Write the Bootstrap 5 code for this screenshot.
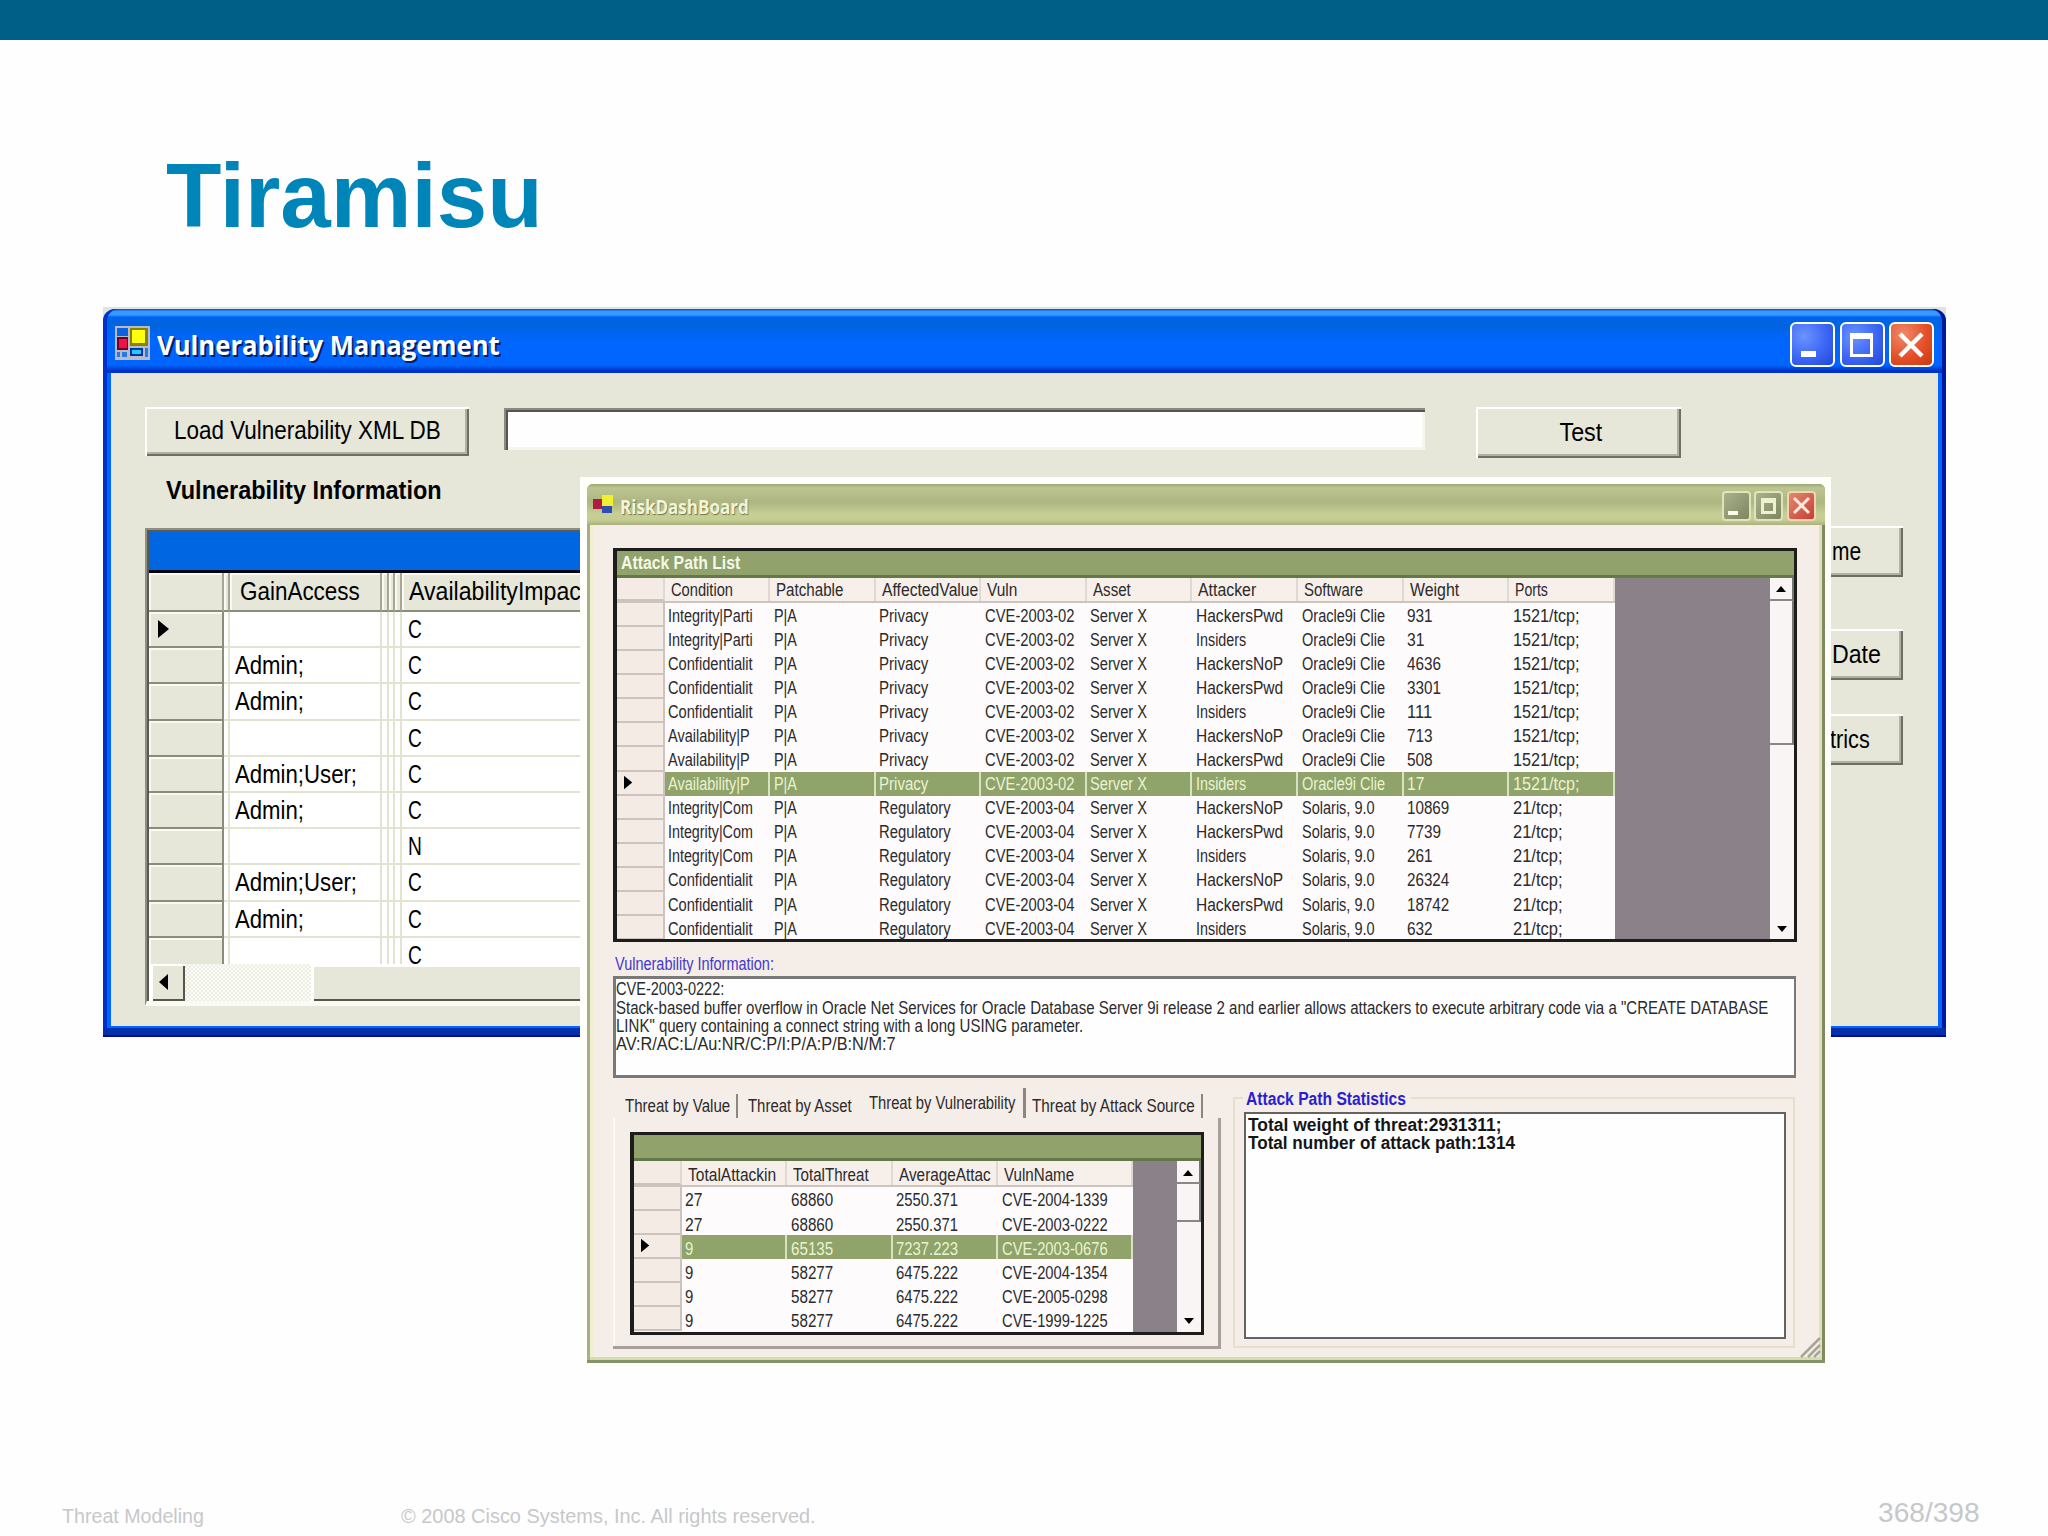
<!DOCTYPE html>
<html lang="en">
<head>
<meta charset="utf-8">
<title>Tiramisu</title>
<link href="https://cdn.jsdelivr.net/npm/bootstrap@5.3.0/dist/css/bootstrap.min.css" rel="stylesheet">
<style>
body{width:2048px;height:1536px;background:#fefefe;font-family:"Liberation Sans",Arial,sans-serif;color:#000;line-height:1;overflow:hidden}
.topbar{height:40px;background:#005f87}
.slide-title{font-size:91px;font-weight:700;color:#0085b9;padding:111px 0 0 166px;line-height:90px}
.ft{display:inline-block;white-space:nowrap;transform-origin:0 50%}
.ft.mid{transform-origin:50% 50%}
.slide-foot{left:0;right:0;top:1497px;height:40px;color:#c6c8ca;font-size:19.5px}
/* blue window */
.win-a{left:103px;top:307px;width:1843px;height:730px;background:#e2e4d8}
.win-a .frame{height:728px;margin-top:2px;border-radius:12px 12px 0 0;background:linear-gradient(#0a5be8 0 1px,#3798ff 2px 6px,#0064f0 8px,#0064dc 14px,#0065ec 22px,#0066ff 34px,#0066ff 56px,#0030c0 62px,#0030c0 64px,#0066ff 64px);padding:0 8px 11px;box-shadow:inset 0 -2px 0 #000c80,inset 0 -9px 0 #0030b0,inset 4px 0 0 #0033cc,inset -4px 0 0 #0018a0}
.bar-a{height:64px;padding:0 4px}
.bar-a .cap{font-family:"Open Sans","Noto Sans",sans-serif;font-weight:700;font-size:27px;color:#fff;text-shadow:2px 2px 0 #00206a;padding-top:7px}
.cbtn{width:45px;height:45px;border:2px solid #fff;border-radius:6px;background:radial-gradient(circle at 30% 30%,#6c93ff,#3c66f4 55%,#2148d8)}
.cbtn.x{background:radial-gradient(circle at 30% 25%,#f08a68,#e5502a 55%,#c83808)}
.client-a{height:653px;background:#e6e7d9;padding:34px 0 0 34px}
.btn95{border:0;border-radius:0;background:#e6e7d9;color:#000;font-size:26px;padding:0;box-shadow:inset 2px 2px 0 #fff,inset -2px -2px 0 #6e6e64,inset -4px -4px 0 #b0b1a0}
.inp95{border:0;border-radius:0;background:#fefefe;box-shadow:inset 2px 2px 0 #8a8b80,inset 4px 4px 0 #55564e,inset -3px -3px 0 #f6f7ee}
.grid-a{width:700px;height:478px;border-left:2px solid #8f9084;border-top:2px solid #8f9084;border-bottom:5px solid #fbfbf5;background:#fff;font-size:26px;box-shadow:inset 2px 2px 0 #5a5a55}
.grid-a .band{margin:2px 0 0 2px;height:41px;background:#0066e2;border-bottom:3px solid #05050f}
.grid-a .rows{margin-left:2px;height:391px;overflow:hidden}
.ra{height:36.2px;flex:none}
.ra.hd{height:39px}
.ra>div{flex:none;border-right:2px solid #e3e3d2;border-bottom:2px solid #e3e3d2;display:flex;align-items:center;padding-left:5px}
.ra>div:first-child,.ra.hd>div{background:#e6e7d9}
.ra>div:first-child{width:75px;border-right:2px solid #8b8c7c;border-bottom:2px solid #8b8c7c;box-shadow:inset 2px 2px 0 #fafaf4}
.ra.hd>div{border-bottom:2px solid #8b8c7c;border-right-color:#a5a693;box-shadow:inset 2px 2px 0 #fafaf4;padding-left:10px;padding-bottom:2px}
.ra>div:nth-child(2){width:6px;padding:0}.ra>div:nth-child(3){width:152px}
.ra>div:nth-child(4),.ra>div:nth-child(5),.ra>div:nth-child(6){width:6.5px;padding:0}
.ra>div:nth-child(7){width:300px;border-right:0;padding-left:6px}
.ra.hd>div:nth-child(7){padding-left:7px}
.sb-a{height:37px;margin-left:2px}
.sb-a .go{width:36px;box-shadow:inset 4px 2px 0 #fff,inset -2px -2px 0 #55564e;background:#e6e7d9}
.sb-a .trk{width:126px;background:repeating-conic-gradient(#eeefe4 0 25%,#fbfbf6 0 50%) 0 0/4px 4px}
.sb-a .thumb{background:#e6e7d9;box-shadow:inset 3px 3px 0 #fff,inset 0 -2px 0 #55564e}
.side{left:1373px;top:219px;width:427px}
.side .btn95{height:51px;text-align:left;padding-left:356px;padding-bottom:2px}
/* green window */
.halo{left:580px;top:477px;width:1250.5px;height:890px;background:#fefefb}
.win-b{margin:7px 0 0 7px;width:1237.5px;height:879px;background:#f5ede7;border-radius:6px 6px 0 0;color:#2c2a2c;font-size:17.5px;box-shadow:inset 0 -3px 0 #869268,inset 3px 0 0 #a9ad88,inset -3px 0 0 #7f8a60,inset 0 -6px 0 #d5dcb2,inset 6px 0 0 #eef0cf,inset -6px 0 0 #dfe0bd}
.bar-b{height:41px;border-radius:6px 6px 0 0;background:linear-gradient(#9da77a,#bcc690 4px,#b6be89 10px,#adb582 18px,#b9c28a 24px,#c6cf95 30px,#c6cd93 36px,#a9b07c);padding:0 9px 0 6px}
.bar-b .cap{font-family:"Open Sans","Noto Sans",sans-serif;font-weight:700;font-size:19px;color:#f1f4d8;text-shadow:1px 1px 1px #6e7750;padding-top:5px}
.sbtn{width:29px;height:30px;border:2px solid #dfe4bd;border-radius:4px;background:linear-gradient(135deg,#a9b188,#7d8760)}
.sbtn.x{border-color:#f3d5b5;background:linear-gradient(135deg,#e08a70,#cc3c34)}
.client-b{padding:22.5px 0 0 26px}
.grid-b{border:3px solid #1d1d1b;border-left-width:4px;background:#fdfbfc;overflow:hidden}
.grid-b .band{background:#91a26d;border-bottom:3px solid #65784a;color:#f4f8e6;font-weight:700;padding-top:3px}
.grid-b .void{background:#8a8288}
.rb{height:24.05px}
.rb>div{width:105.6px;flex:none;padding-left:3.5px;overflow:hidden;height:100%;display:flex;align-items:center}
.rb>div:not(:first-child){padding-top:3px}
.rb>div:first-child{width:47.5px;background:#f5ebe5;border-right:2px solid #cdc2bd;border-bottom:2px solid #cdc2bd}
.rb.hd{height:25.7px;background:#f6efea;border-bottom:2px solid #cdc4be}
.rb.hd>div{padding-left:6px;border-right:2px solid #e0d8d2}
.rb.sel>div:not(:first-child){background:#8fa36b;color:#e9f3cf;border-right:2px solid #d9e2c0}
.sb-b{width:24px;background:#faf5f5}
.sb-b .up{height:23px;border-bottom:2px solid #888;border-right:2px solid #777}
.sb-b .thumb{border-bottom:2px solid #888;border-right:2px solid #777}
.blue{color:#4338cf}
.memo{border:3px solid #7b7978;border-right-width:2px;background:#fefefe;width:1183px;height:102px;padding:2px 0 0 0;margin-top:5px}
.memo div{height:18.3px;display:flex;align-items:center}
.tabs95{height:31px}
.tabs95>div{flex:none;height:24px;display:flex;align-items:center;padding-top:2px}
.tabpage{width:608px;height:231px;border-right:3px solid #a79f99;border-bottom:3px solid #a79f99;box-shadow:inset 2px 0 0 #fcf8f4;padding:14px 0 0 17px}
.tabpage .rb>div:not(:first-child){padding-top:5px}
.grp{width:562px;height:251px;border:2px solid #e6dfcb;padding:13px 0 0 9px}
.grp .lst{width:542px;height:227px;border:2px solid #66625f;background:#fefefe;font-weight:700;color:#151515;padding-top:2px}
.grp .lst div{height:18.5px;display:flex;align-items:center;padding-left:2px}
.grp .ttl{left:8px;top:-8px;background:#f5ede7;font-weight:700;color:#2a1ed0;width:168px;padding-left:3px;height:18px}
.grip{right:4px;bottom:5px}
</style>
</head>
<body class="position-relative">
<div class="topbar"></div>
<div class="slide-title"><span class="ft" data-w="377">Tiramisu</span></div>

<section class="win-a position-absolute">
 <div class="frame">
  <div class="bar-a d-flex align-items-center">
   <svg width="35" height="34" viewBox="0 0 35 34" style="margin-top:3px"><rect width="35" height="34" fill="#b7bcc8"/><rect x="2" y="2" width="11" height="8" fill="#0a62e0"/><rect x="2" y="11" width="11" height="13" fill="#700020"/><rect x="4" y="13" width="8" height="9" fill="#f0104c"/><rect x="15" y="2" width="18" height="18" fill="#8a8000"/><rect x="17" y="4" width="13" height="13" fill="#ffff10"/><rect x="15" y="22" width="13" height="8" fill="#0030b0"/><rect x="17" y="24" width="9" height="4" fill="#20d0f0"/><path d="M2 26h3v5H2zM7 26h5v5H7zM30 22h3v9h-3z" fill="#2a78e0"/></svg>
   <div class="cap" style="margin-left:7px"><span class="ft" data-w="343">Vulnerability Management</span></div>
   <div class="d-flex ms-auto" style="gap:4.5px;margin-top:7px">
    <div class="cbtn"><svg width="41" height="41"><path d="M9 27h15v6H9z" fill="#fff"/></svg></div>
    <div class="cbtn"><svg width="41" height="41"><path d="M8 9h23v24H8zM11 15v15h17V15z" fill="#fff" fill-rule="evenodd"/></svg></div>
    <div class="cbtn x"><svg width="41" height="41"><path d="M9 10L31 32M31 10L9 32" stroke="#fff" stroke-width="4.5"/></svg></div>
   </div>
  </div>
  <div class="client-a position-relative">
   <div class="d-flex align-items-start">
    <button class="btn95" style="width:324px;height:49px;padding-bottom:4px"><span class="ft mid" data-w="267">Load Vulnerability XML DB</span></button>
    <div class="inp95" style="width:921px;height:42px;margin:1px 51px 0 35px"></div>
    <button class="btn95" style="width:205px;height:51px;padding:0 0 2px 5px"><span class="ft mid" data-w="43">Test</span></button>
   </div>
   <div class="fw-bold" style="font-size:25px;margin:20px 0 0 21px;height:50px"><span class="ft" data-w="276">Vulnerability Information</span></div>
   <div class="grid-a" id="gridA"><div class="band"></div><div class="rows" id="rowsA"></div>
    <div class="sb-a d-flex"><div class="go"><svg width="36" height="36"><path d="M10 18l9-8v16z"/></svg></div><div class="trk"></div><div class="thumb flex-fill"></div></div>
   </div>
  </div>
 </div>
 <div class="side position-absolute d-flex flex-column">
  <button class="btn95" style="margin-bottom:52px"><span class="ft" data-w="29">me</span></button>
  <button class="btn95" style="margin-bottom:34px"><span class="ft" data-w="49">Date</span></button>
  <button class="btn95" style="padding-left:354px"><span class="ft" data-w="40">trics</span></button>
 </div>
</section>

<div class="halo position-absolute">
<section class="win-b position-relative">
 <div class="bar-b d-flex align-items-center">
  <svg width="21" height="19" viewBox="0 0 21 19"><rect x="9" y="0" width="11" height="11" fill="#f2ee30"/><rect x="0" y="4" width="9" height="10" fill="#b01c40"/><rect x="9" y="11" width="10" height="7" fill="#2f4fb0"/></svg>
  <div class="cap" style="margin-left:6px"><span class="ft" data-w="129">RiskDashBoard</span></div>
  <div class="d-flex ms-auto" style="gap:3.5px;margin-top:3px">
   <div class="sbtn"><svg width="25" height="26" class="d-block"><path d="M4 18h10v4H4z" fill="#fbfbe8"/></svg></div>
   <div class="sbtn"><svg width="25" height="26" class="d-block"><path d="M5 5h15v16H5zM8 10v8h9v-8z" fill="#eef0d0" fill-rule="evenodd"/></svg></div>
   <div class="sbtn x"><svg width="25" height="26" class="d-block"><path d="M5 5L20 20M20 5L5 20" stroke="#fbe8d8" stroke-width="3"/></svg></div>
  </div>
 </div>
 <div class="client-b">
  <div class="grid-b" style="width:1183.5px;height:394.5px">
   <div class="band d-flex align-items-center" style="height:27px;padding-left:4px"><span class="ft" data-w="119">Attack Path List</span></div>
   <div class="d-flex" style="height:362px">
    <div id="rowsB" style="width:998px"></div><div class="void flex-fill"></div>
    <div class="sb-b d-flex flex-column"><div class="up"><svg width="22" height="21" class="d-block"><path d="M6 14l5-6 5 6z"/></svg></div><div class="thumb" style="height:144px"></div><svg class="mt-auto" width="24" height="24"><path d="M7 10l5 6 5-6z"/></svg></div>
   </div>
  </div>
  <div class="blue" style="padding:14px 0 0 2px;height:29px"><span class="ft" data-w="159">Vulnerability Information:</span></div>
  <div class="memo"><div><span class="ft" data-w="108">CVE-2003-0222:</span></div><div><span class="ft" data-w="1152">Stack-based buffer overflow in Oracle Net Services for Oracle Database Server 9i release 2 and earlier allows attackers to execute arbitrary code via a "CREATE DATABASE</span></div><div><span class="ft" data-w="467">LINK" query containing a connect string with a long USING parameter.</span></div><div><span class="ft" data-w="280">AV:R/AC:L/Au:NR/C:P/I:P/A:P/B:N/M:7</span></div></div>
  <div class="d-flex" style="margin-top:9px">
   <div>
    <div class="tabs95 d-flex align-items-end">
     <div style="width:125px;padding-left:12px;border-right:2px solid #8d8581"><span class="ft" data-w="105">Threat by Value</span></div>
     <div style="width:122px;padding-left:10px"><span class="ft" data-w="104">Threat by Asset</span></div>
     <div style="width:166px;padding-left:9px;border-right:3px solid #8d8581;height:30px"><span class="ft" data-w="146">Threat by Vulnerability</span></div>
     <div style="width:177px;padding-left:6px;border-right:2px solid #8d8581"><span class="ft" data-w="163">Threat by Attack Source</span></div>
    </div>
    <div class="tabpage">
     <div class="grid-b" style="width:574px;height:202.5px">
      <div class="band" style="height:26px"></div>
      <div class="d-flex" style="height:171px">
       <div id="rowsC" style="width:498.5px"></div><div class="void flex-fill"></div>
       <div class="sb-b d-flex flex-column"><div class="up"><svg width="22" height="21" class="d-block"><path d="M6 15l5-6 5 6z"/></svg></div><div class="thumb" style="height:38px"></div><svg class="mt-auto" width="24" height="24"><path d="M7 10l5 6 5-6z"/></svg></div>
      </div>
     </div>
    </div>
   </div>
   <div class="grp position-relative" style="margin:10px 0 0 12px"><div class="ttl position-absolute"><span class="ft" data-w="160">Attack Path Statistics</span></div>
    <div class="lst"><div><span class="ft" data-w="253">Total weight of threat:2931311;</span></div><div><span class="ft" data-w="267">Total number of attack path:1314</span></div></div>
   </div>
  </div>
 </div>
 <svg class="grip position-absolute" width="22" height="22"><path d="M2 21L21 2M9 21L21 9M15 21L21 15" stroke="#a8a595" stroke-width="2.5"/></svg>
</section>
</div>

<footer class="slide-foot position-absolute d-flex align-items-center">
 <div style="width:339px;margin-left:62px"><span class="ft" data-w="142">Threat Modeling</span></div>
 <div><span class="ft" data-w="415">© 2008 Cisco Systems, Inc. All rights reserved.</span></div>
 <div class="ms-auto" style="font-size:27px;margin-right:72px;margin-top:-8px"><span class="ft" data-w="102">368/398</span></div>
</footer>

<script src="https://cdn.jsdelivr.net/npm/bootstrap@5.3.0/dist/js/bootstrap.bundle.min.js"></script>
<script>
// rendered width in px of every grid value
const W={GainAccess:120,AvailabilityImpact:178,'Admin;':69,'Admin;User;':122,C:14,N:14,
Condition:62,Patchable:67.5,AffectedValue:96,Vuln:30,Asset:38,Attacker:58,Software:59,Weight:49,Ports:33,
'Integrity|Parti':85,'Integrity|Com':85,'Confidentialit':84.5,'Availability|P':82,'P|A':23,Privacy:49,Regulatory:72,
'CVE-2003-02':89.5,'CVE-2003-04':89.5,'Server X':57,HackersPwd:87,HackersNoP:87,Insiders:50,'Oracle9i Clie':83,'Solaris, 9.0':73,
'1521/tcp;':66.5,'21/tcp;':50,TotalAttackin:88,TotalThreat:76,AverageAttac:92,VulnName:70};
const cell=t=>{if(!t)return'<div></div>';const w=W[t]||(/^CVE/.test(t)?106:t.includes('.')?62:t.length*8.5);return`<div><span class="ft" data-w="${w}">${t}</span></div>`};
const ptr=s=>`<div><svg width="${s}" height="${s}" viewBox="0 0 20 20"><path d="M4 1v18l11-9z"/></svg></div>`;
const row=(cls,first,cells)=>`<div class="d-flex ${cls}">${first}${cells.map(cell).join('')}</div>`;
const a=[['','C'],['Admin;','C'],['Admin;','C'],['','C'],['Admin;User;','C'],['Admin;','C'],['','N'],['Admin;User;','C'],['Admin;','C'],['','C']];
rowsA.innerHTML=row('ra hd','<div></div>',['','GainAccess','','','','AvailabilityImpact'])+a.map((r,i)=>row('ra',i?'<div></div>':ptr(20),['',r[0],'','','',r[1]])).join('');
const o=(c,k,w)=>[c,'P|A','Privacy','CVE-2003-02','Server X',k,'Oracle9i Clie',w,'1521/tcp;'];
const s=(c,k,w)=>[c,'P|A','Regulatory','CVE-2003-04','Server X',k,'Solaris, 9.0',w,'21/tcp;'];
const I='Integrity|Parti',J='Integrity|Com',D='Confidentialit',V='Availability|P',hp='HackersPwd',hn='HackersNoP',n='Insiders';
const b=[o(I,hp,'931'),o(I,n,'31'),o(D,hn,'4636'),o(D,hp,'3301'),o(D,n,'111'),o(V,hn,'713'),o(V,hp,'508'),o(V,n,'17'),
s(J,hn,'10869'),s(J,hp,'7739'),s(J,n,'261'),s(D,hn,'26324'),s(D,hp,'18742'),s(D,n,'632')];
rowsB.innerHTML=row('rb hd','<div></div>',['Condition','Patchable','AffectedValue','Vuln','Asset','Attacker','Software','Weight','Ports'])+b.map((r,i)=>row('rb'+(i==7?' sel':''),i==7?ptr(15):'<div></div>',r)).join('');
const c=[['27','68860','2550.371','CVE-2004-1339'],['27','68860','2550.371','CVE-2003-0222'],['9','65135','7237.223','CVE-2003-0676'],['9','58277','6475.222','CVE-2004-1354'],['9','58277','6475.222','CVE-2005-0298'],['9','58277','6475.222','CVE-1999-1225']];
rowsC.innerHTML=row('rb hd','<div></div>',['TotalAttackin','TotalThreat','AverageAttac','VulnName'])+c.map((r,i)=>row('rb'+(i==2?' sel':''),i==2?ptr(15):'<div></div>',r)).join('');
document.querySelectorAll('#rowsC .rb>div:last-child').forEach(e=>e.style.width='135px');
// squeeze each label horizontally to its bitmap-font width
document.querySelectorAll('.ft').forEach(e=>{e.style.transform=`scaleX(${e.dataset.w/e.offsetWidth})`});
</script>
</body>
</html>
